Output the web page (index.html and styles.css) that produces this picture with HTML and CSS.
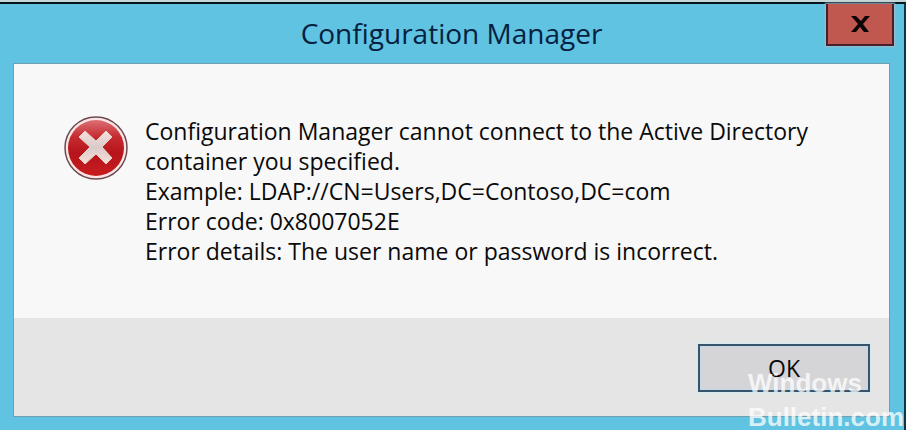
FILE: index.html
```html
<!DOCTYPE html>
<html lang="en">
<head>
  <meta charset="UTF-8">
  <meta name="viewport" content="width=device-width, initial-scale=1.0">
  <title>Configuration Manager</title>
  <link rel="stylesheet" href="styles.css">
</head>
<body>
  <div class="window">
    <header class="titlebar">
      <h1 class="title">Configuration Manager</h1>
      <button class="close" aria-label="Close">
        <svg width="20" height="18" viewBox="0 0 20 18">
          <path d="M1 1h5l5 5 4-5h5l-7 8 6 8h-5l-4-5-4 5H1l7-8z" fill="#0c0406"/>
        </svg>
      </button>
    </header>

    <main class="panel">
      <div class="content">
        <svg class="error-icon" width="64" height="64" viewBox="0 0 64 64">
          <defs>
            <linearGradient id="red" x1="0" y1="0" x2="0" y2="1">
              <stop offset="0" stop-color="#dc7074"/>
              <stop offset="0.3" stop-color="#c52b30"/>
              <stop offset="0.6" stop-color="#b5141a"/>
              <stop offset="1" stop-color="#c81d20"/>
            </linearGradient>
            <linearGradient id="cross" x1="0" y1="0" x2="0" y2="1">
              <stop offset="0" stop-color="#f6dfd8"/>
              <stop offset="0.5" stop-color="#d9cbcc"/>
              <stop offset="1" stop-color="#f8ded4"/>
            </linearGradient>
          </defs>
          <circle cx="32" cy="32" r="31" fill="#f8e6e6" stroke="#6e4a50" stroke-width="1.5"/>
          <circle cx="32" cy="32" r="28" fill="url(#red)"/>
          <path d="M21 15l11 10 10-10 6 6-10 10 10 11-6 6-10-10-11 10-6-6 11-11-11-10z" fill="url(#cross)" stroke="#e9cfca" stroke-width="1" stroke-linejoin="round"/>
        </svg>
        <p class="message">
          Configuration Manager cannot connect to the Active Directory<br>
          container you specified.<br>
          Example: LDAP://CN=Users,DC=Contoso,DC=com<br>
          Error code: 0x8007052E<br>
          Error details: The user name or password is incorrect.
        </p>
      </div>
      <footer class="actions">
        <button class="ok">OK</button>
      </footer>
    </main>

    <div class="watermark">Windows<br>Bulletin.com</div>
  </div>
</body>
</html>
```
FILE: styles.css
```css
* {
  margin: 0;
  padding: 0;
  box-sizing: border-box;
}

body {
  font-family: "Open Sans", "Segoe UI", sans-serif;
  color: #0a0a0a;
  background-color: #c3d5d6;
  padding-top: 2px;
}

.window {
  position: relative;
  display: flex;
  flex-direction: column;
  min-height: calc(100vh - 2px);
  padding: 0 14px 13px 13px;
  background-color: #60c3e1;
  border-top: 2px solid #04141c;
  border-right: 2px solid #0d3648;
}

/* title bar */
.titlebar {
  display: grid;
  grid-template-columns: 1fr auto 1fr;
  align-items: start;
  height: 59px;
}

.title {
  grid-column: 2;
  font-size: 28px;
  font-weight: 400;
  line-height: 58px;
  color: #06213f;
}

.close {
  justify-self: end;
  display: flex;
  align-items: center;
  justify-content: center;
  width: 68px;
  height: 42px;
  margin-right: -4px;
  background-color: #c05850;
  border: 2px solid #48202c;
  border-top: none;
  box-shadow: 0 0 2px 1px #a3bcca;
  cursor: pointer;
}

/* dialog */
.panel {
  flex: 1;
  display: flex;
  flex-direction: column;
  background-color: #f8f8f8;
  border: 1px solid #6fa0b0;
}

.content {
  flex: 1;
  display: flex;
  align-items: flex-start;
  gap: 17px;
  padding: 52px 50px 50px;
}

.error-icon {
  flex-shrink: 0;
}

.message {
  font-size: 23px;
  line-height: 30px;
}

.actions {
  display: flex;
  justify-content: flex-end;
  padding: 26px 19px 24px;
  background-color: #e6e5e5;
}

.ok {
  width: 172px;
  height: 48px;
  font-family: inherit;
  font-size: 23px;
  color: #0a0a0a;
  background-color: #d5d4d7;
  border: 2px solid #38546a;
  box-shadow: 0 0 2px 1px #d3ebf5, inset 0 0 2px 1px #c3dbea;
  cursor: pointer;
}

.watermark {
  position: absolute;
  right: 0;
  bottom: -4px;
  font-family: "Liberation Sans", Arial, sans-serif;
  font-size: 26px;
  font-weight: 700;
  line-height: 34px;
  color: rgba(255, 255, 255, 0.75);
  pointer-events: none;
}
```
